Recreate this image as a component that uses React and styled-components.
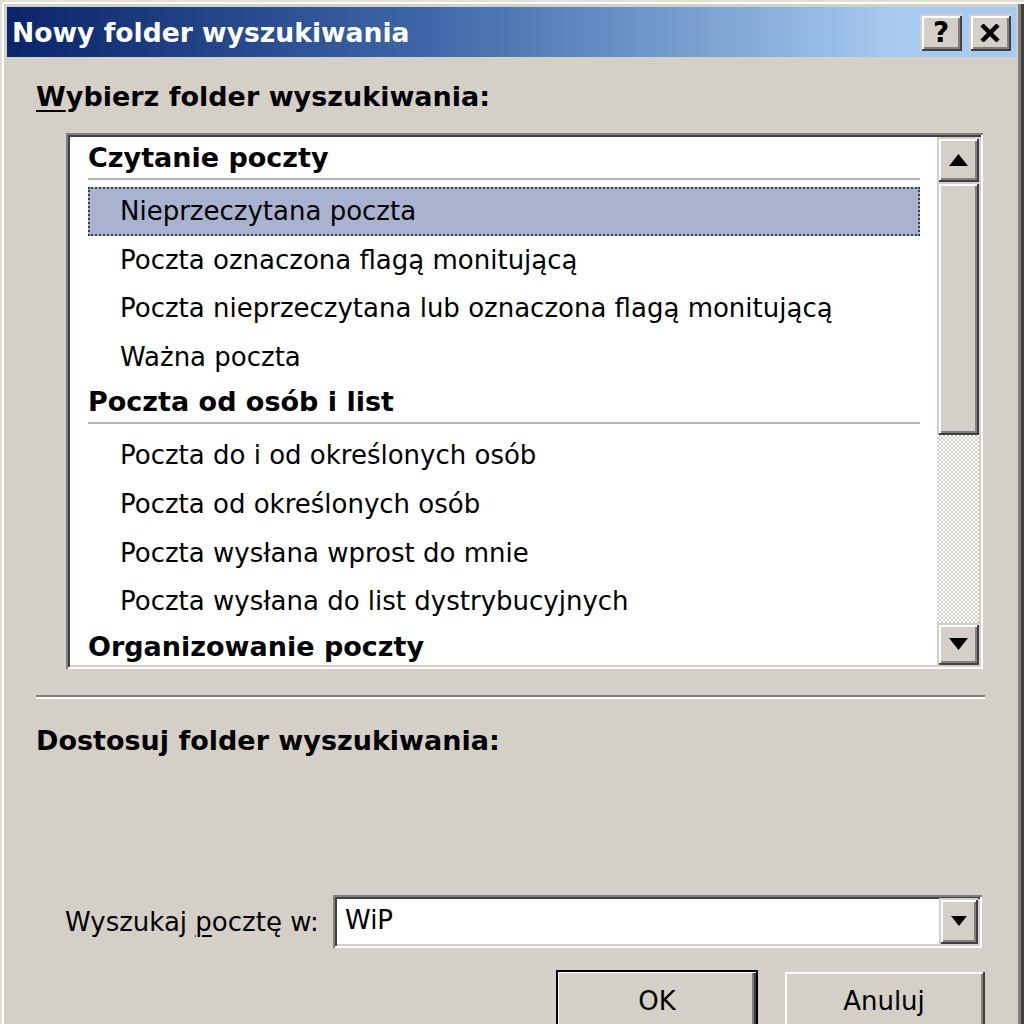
import React from "react";
import styled, { createGlobalStyle, css } from "styled-components";

const GlobalStyle = createGlobalStyle`
  body {
    margin: 0;
    background: #d4d0c8;
    font-family: "DejaVu Sans", Tahoma, sans-serif;
    color: #000;
  }
`;

const raised = css`
  background: #d4d0c8;
  box-shadow: inset 2px 2px 0 #d4d0c8, inset -2px -2px 0 #404040,
    inset 4px 4px 0 #fff, inset -4px -4px 0 #808080;
`;

const sunken = css`
  box-shadow: inset 2px 2px 0 #808080, inset -2px -2px 0 #fff,
    inset 4px 4px 0 #404040, inset -4px -4px 0 #d4d0c8;
`;

// only what fits in the visible part of the list
const groups = [
  {
    title: "Czytanie poczty",
    items: [
      "Nieprzeczytana poczta",
      "Poczta oznaczona flagą monitującą",
      "Poczta nieprzeczytana lub oznaczona flagą monitującą",
      "Ważna poczta",
    ],
  },
  {
    title: "Poczta od osób i list",
    items: [
      "Poczta do i od określonych osób",
      "Poczta od określonych osób",
      "Poczta wysłana wprost do mnie",
      "Poczta wysłana do list dystrybucyjnych",
    ],
  },
  {
    title: "Organizowanie poczty",
    items: [],
  },
];

const Arrow = ({ down, w = 19, h = 12 }) => (
  <svg width={w} height={h} viewBox="0 0 19 12">
    <polygon
      points={down ? "0,0 19,0 9.5,12" : "9.5,0 19,12 0,12"}
      fill="#000"
    />
  </svg>
);

const App = () => {
  return (
    <>
      <GlobalStyle />
      <Window>
        <TitleBar>
          <Title>Nowy folder wyszukiwania</Title>
          <CaptionButtons>
            <CaptionButton>?</CaptionButton>
            <CaptionButton>
              <svg width="20" height="18" viewBox="0 0 20 18">
                <path
                  d="M2 1 L18 17 M18 1 L2 17"
                  stroke="#000"
                  strokeWidth="4.5"
                />
              </svg>
            </CaptionButton>
          </CaptionButtons>
        </TitleBar>

        <SectionLabel>
          <u>W</u>ybierz folder wyszukiwania:
        </SectionLabel>

        <ListBox>
          <ListItems>
            {groups.map((group, gi) => (
              <React.Fragment key={group.title}>
                <GroupHeader>
                  <span>{group.title}</span>
                  <GroupRule />
                </GroupHeader>
                {group.items.map((item, ii) => (
                  <ListItem key={item} $selected={gi === 0 && ii === 0}>
                    {item}
                  </ListItem>
                ))}
              </React.Fragment>
            ))}
          </ListItems>
          <ScrollBar>
            <ScrollButton $h={45}>
              <Arrow />
            </ScrollButton>
            <ScrollThumb />
            <ScrollTrack />
            <ScrollButton $h={42}>
              <Arrow down />
            </ScrollButton>
          </ScrollBar>
        </ListBox>

        <Etched />

        <SectionLabel $top={26}>Dostosuj folder wyszukiwania:</SectionLabel>

        <SearchRow>
          <FieldLabel>
            Wyszukaj <u>p</u>ocztę w:
          </FieldLabel>
          <ComboBox>
            <ComboValue>WiP</ComboValue>
            <DropButton>
              <Arrow down w={16} h={10} />
            </DropButton>
          </ComboBox>
        </SearchRow>

        <ButtonRow>
          <PushButton $default>OK</PushButton>
          <PushButton>Anuluj</PushButton>
        </ButtonRow>
      </Window>
    </>
  );
};

const Window = styled.div`
  width: 1024px;
  height: 1024px;
  box-sizing: border-box;
  overflow: hidden;
  background: #d4d0c8;
  padding: 7px 8px 0 7px;
  display: flex;
  flex-direction: column;
  box-shadow: inset 2px 2px 0 #e4e0d8, inset 4px 4px 0 #fff,
    inset -3px 0 0 #404040, inset -6px 0 0 #808080;
`;

const TitleBar = styled.div`
  height: 50px;
  flex-shrink: 0;
  display: flex;
  align-items: center;
  justify-content: space-between;
  padding: 0 5px;
  background: linear-gradient(90deg, #0a246a 0%, #3f68a8 42%, #a6caf0 88%);
`;

const Title = styled.div`
  color: #fff;
  font-weight: bold;
  font-size: 26.6px;
  white-space: nowrap;
`;

const CaptionButtons = styled.div`
  display: flex;
  gap: 7px;
  align-items: center;
`;

const CaptionButton = styled.div`
  ${raised};
  width: 42px;
  height: 37px;
  display: flex;
  align-items: center;
  justify-content: center;
  font-weight: bold;
  font-size: 28px;
  line-height: 1;
  padding-top: 1px;
  box-sizing: border-box;
`;

const SectionLabel = styled.div`
  margin: ${(p) => p.$top ?? 24}px 0 0 29px;
  font-weight: bold;
  font-size: 27px;
  line-height: 32px;
  white-space: nowrap;

  u {
    text-decoration-thickness: 2px;
    text-underline-offset: 4px;
  }
`;

const ListBox = styled.div`
  ${sunken};
  margin: 20px 0 0 59px;
  width: 917px;
  height: 536px;
  box-sizing: border-box;
  padding: 4px;
  background: #fff;
  display: flex;
  flex-shrink: 0;
`;

const ListItems = styled.div`
  flex: 1;
  overflow: hidden;
  padding: 0 17px 0 18px;
  background: #fff;
`;

const GroupHeader = styled.div`
  height: 50px;
  font-weight: bold;
  font-size: 27px;
  white-space: nowrap;

  span {
    display: block;
    height: 41px;
    line-height: 41px;
  }
`;

const GroupRule = styled.div`
  height: 2px;
  background: #b4b4b4;
`;

const ListItem = styled.div`
  height: 48.6px;
  line-height: 44.6px;
  box-sizing: border-box;
  padding-left: 30px;
  font-size: 26px;
  white-space: nowrap;
  border: 2px solid transparent;
  ${(p) =>
    p.$selected &&
    css`
      background: #a9b2cf;
      border: 2px dotted #3a3f55;
    `}
`;

const ScrollBar = styled.div`
  width: 42px;
  display: flex;
  flex-direction: column;
`;

const ScrollButton = styled.div`
  ${raised};
  height: ${(p) => p.$h}px;
  display: flex;
  align-items: center;
  justify-content: center;
`;

const ScrollThumb = styled.div`
  ${raised};
  height: 253px;
`;

const ScrollTrack = styled.div`
  flex: 1;
  background-color: #fff;
  background-image: repeating-conic-gradient(#d4d0c8 0 25%, #fff 0 50%);
  background-size: 4px 4px;
`;

const Etched = styled.div`
  margin: 26px 0 0 29px;
  width: 949px;
  height: 2px;
  background: #808080;
  border-bottom: 2px solid #fff;
  flex-shrink: 0;
`;

const SearchRow = styled.div`
  margin: 138px 0 0 58px;
  display: grid;
  grid-template-columns: 268px 649px;
  align-items: center;
`;

const FieldLabel = styled.div`
  font-size: 26px;
  white-space: nowrap;

  u {
    text-decoration-thickness: 2px;
    text-underline-offset: 4px;
  }
`;

const ComboBox = styled.div`
  ${sunken};
  height: 53px;
  box-sizing: border-box;
  padding: 3px 4px 4px 4px;
  background: #fff;
  display: flex;
  align-items: stretch;
`;

const ComboValue = styled.div`
  flex: 1;
  padding-left: 8px;
  font-size: 26px;
  line-height: 44px;
`;

const DropButton = styled.div`
  ${raised};
  width: 39px;
  display: flex;
  align-items: center;
  justify-content: center;
`;

const ButtonRow = styled.div`
  margin: 22px 31px 0 0;
  display: flex;
  justify-content: flex-end;
  gap: 25px;
`;

const PushButton = styled.div`
  ${raised};
  width: 202px;
  height: 62px;
  box-sizing: border-box;
  display: flex;
  align-items: center;
  justify-content: center;
  font-size: 26px;
  ${(p) =>
    p.$default &&
    css`
      box-shadow: inset 0 0 0 2px #000, inset 3px 3px 0 #fff,
        inset -4px -4px 0 #404040, inset -6px -6px 0 #808080;
    `}
`;

export default App;
